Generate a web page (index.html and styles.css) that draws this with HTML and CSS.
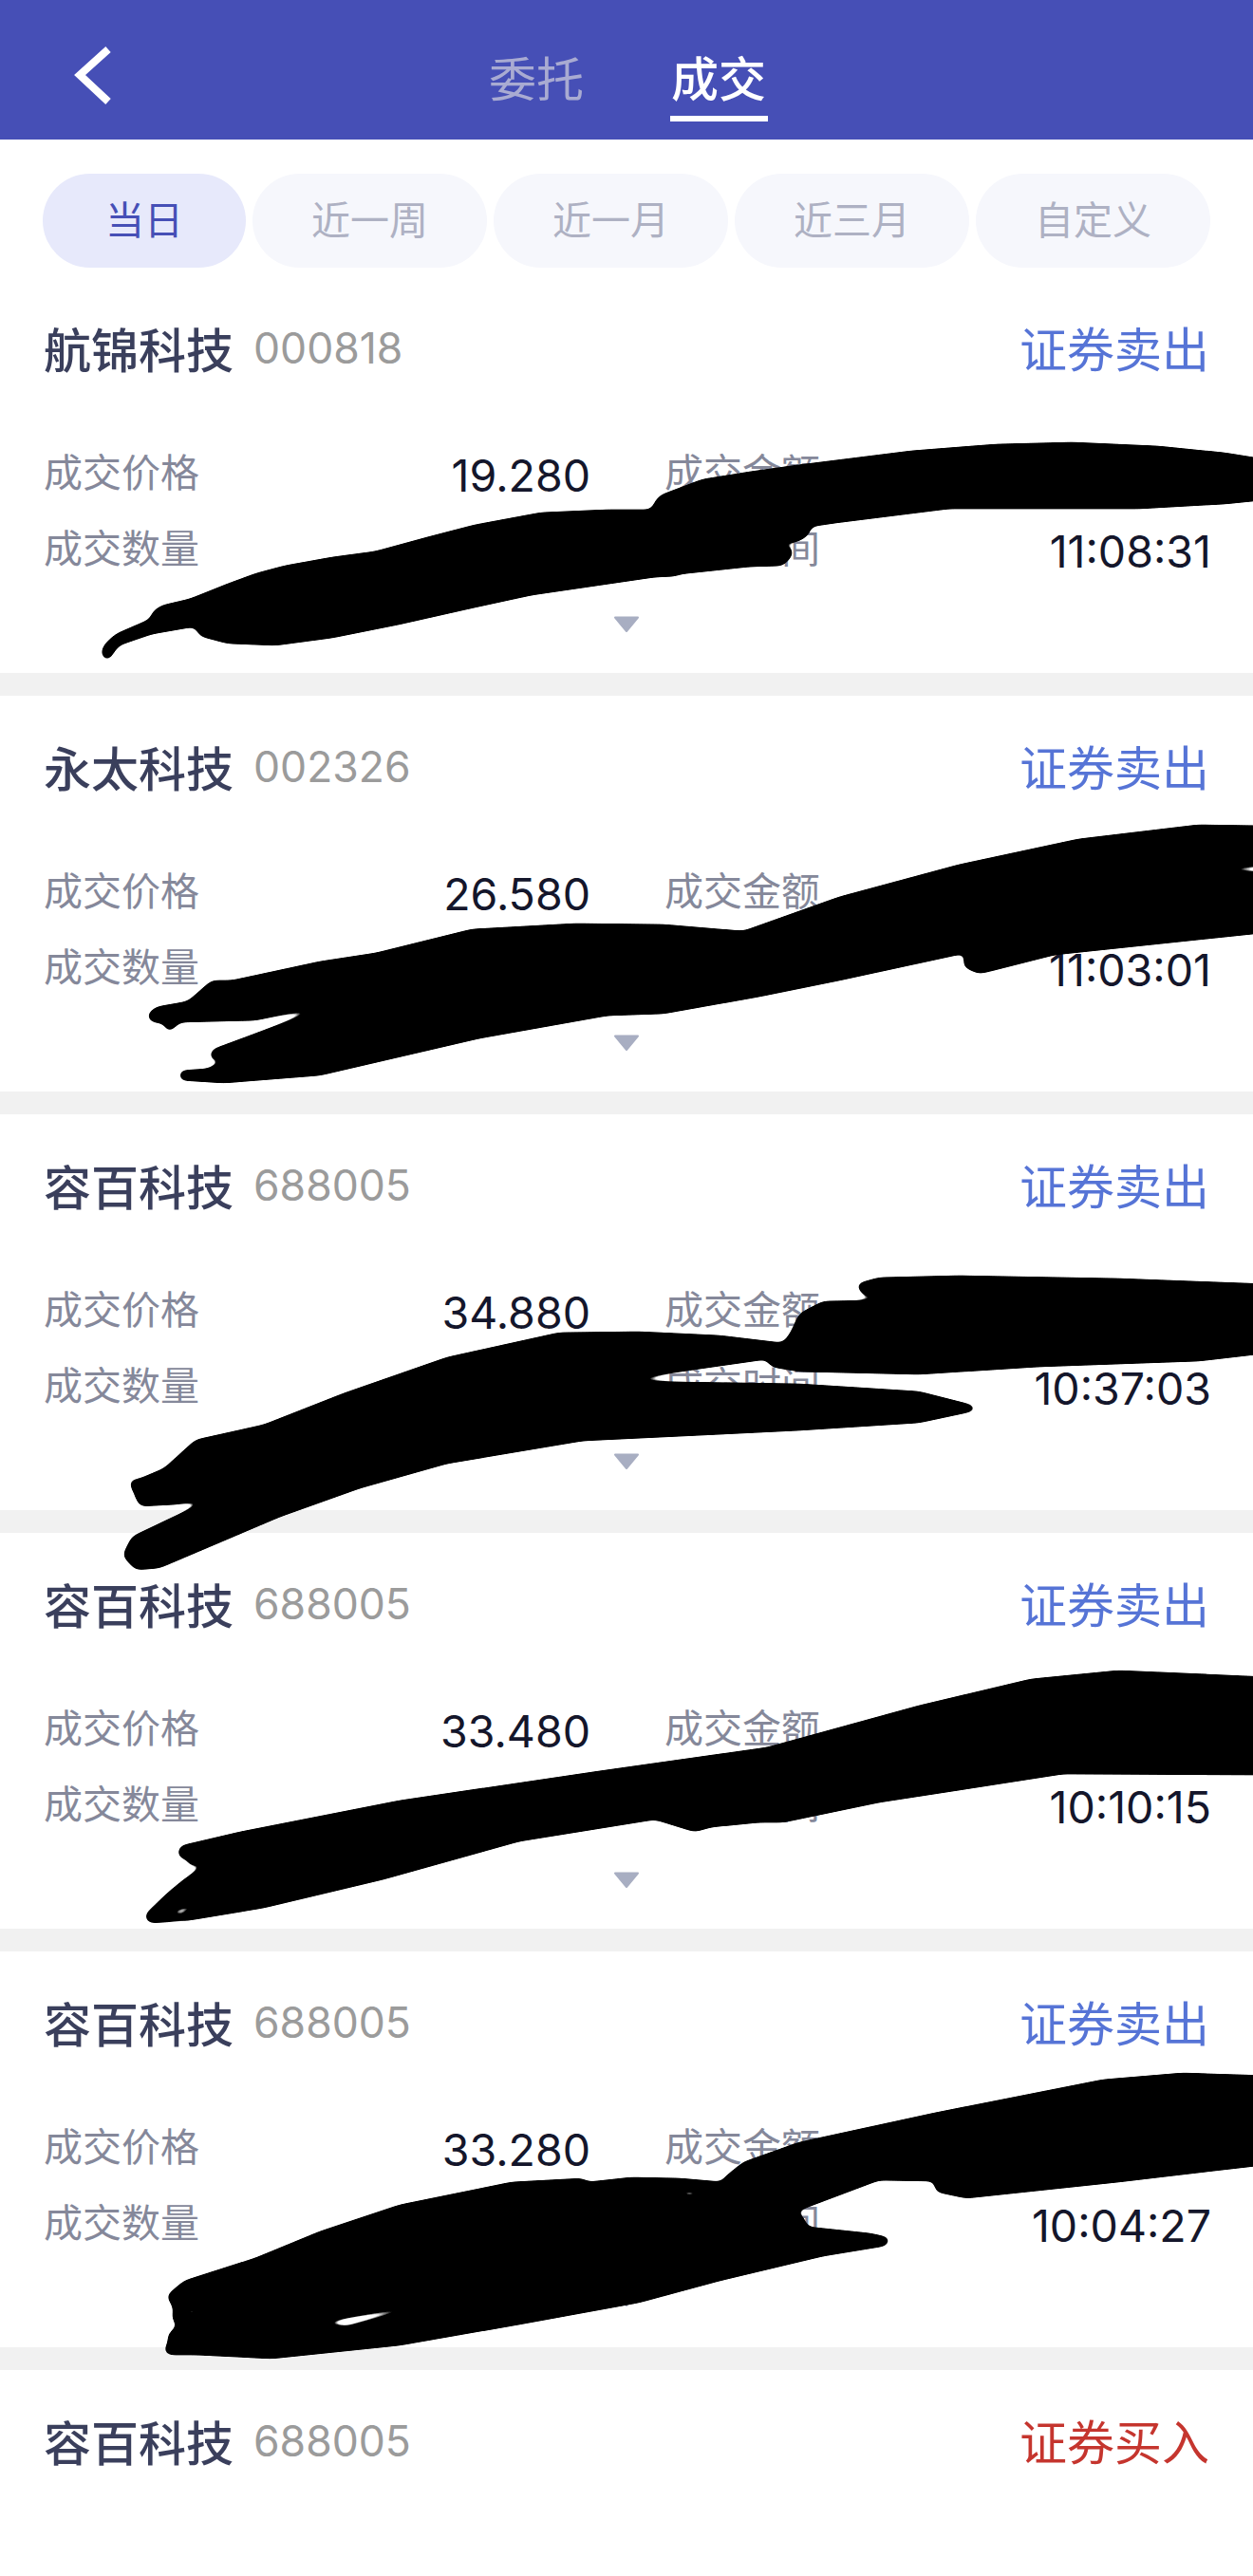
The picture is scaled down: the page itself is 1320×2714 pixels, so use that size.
FILE: index.html
```html
<!DOCTYPE html>
<html lang="zh-CN">
<head>
<meta charset="utf-8">
<title>成交</title>
<link rel="stylesheet" href="styles.css">
</head>
<body>
<div class="page">
  <header class="topbar">
    <div class="back">
      <svg width="44" height="70" viewBox="0 0 44 70"><polyline points="36,5 6,32 36,60" fill="none" stroke="#fff" stroke-width="8"/></svg>
    </div>
    <nav class="tabs">
      <span class="tab">委托</span>
      <span class="tab tab-on">成交</span>
    </nav>
    <div></div>
  </header>

  <div class="filters">
    <span class="pill pill-on">当日</span>
    <span class="pill">近一周</span>
    <span class="pill">近一月</span>
    <span class="pill">近三月</span>
    <span class="pill">自定义</span>
  </div>

  <main class="list">
    <section class="card">
      <div class="head"><span class="name">航锦科技</span><span class="code">000818</span><span class="type sell">证券卖出</span></div>
      <div class="rows">
        <div class="row"><span class="label">成交价格</span><span class="value">19.280</span></div>
        <div class="row"><span class="label">成交金额</span><span class="value"></span></div>
        <div class="row"><span class="label">成交数量</span><span class="value"></span></div>
        <div class="row"><span class="label">成交时间</span><span class="value">11:08:31</span></div>
      </div>
      <svg class="more" width="28" height="18" viewBox="0 0 28 18"><polygon points="2,1.500 26,1.500 14,16" fill="#a8aec2" stroke="#a8aec2" stroke-width="2" stroke-linejoin="round"/></svg>
    </section>
    <section class="card">
      <div class="head"><span class="name">永太科技</span><span class="code">002326</span><span class="type sell">证券卖出</span></div>
      <div class="rows">
        <div class="row"><span class="label">成交价格</span><span class="value">26.580</span></div>
        <div class="row"><span class="label">成交金额</span><span class="value"></span></div>
        <div class="row"><span class="label">成交数量</span><span class="value"></span></div>
        <div class="row"><span class="label">成交时间</span><span class="value">11:03:01</span></div>
      </div>
      <svg class="more" width="28" height="18" viewBox="0 0 28 18"><polygon points="2,1.500 26,1.500 14,16" fill="#a8aec2" stroke="#a8aec2" stroke-width="2" stroke-linejoin="round"/></svg>
    </section>
    <section class="card">
      <div class="head"><span class="name">容百科技</span><span class="code">688005</span><span class="type sell">证券卖出</span></div>
      <div class="rows">
        <div class="row"><span class="label">成交价格</span><span class="value">34.880</span></div>
        <div class="row"><span class="label">成交金额</span><span class="value"></span></div>
        <div class="row"><span class="label">成交数量</span><span class="value"></span></div>
        <div class="row"><span class="label">成交时间</span><span class="value">10:37:03</span></div>
      </div>
      <svg class="more" width="28" height="18" viewBox="0 0 28 18"><polygon points="2,1.500 26,1.500 14,16" fill="#a8aec2" stroke="#a8aec2" stroke-width="2" stroke-linejoin="round"/></svg>
    </section>
    <section class="card">
      <div class="head"><span class="name">容百科技</span><span class="code">688005</span><span class="type sell">证券卖出</span></div>
      <div class="rows">
        <div class="row"><span class="label">成交价格</span><span class="value">33.480</span></div>
        <div class="row"><span class="label">成交金额</span><span class="value"></span></div>
        <div class="row"><span class="label">成交数量</span><span class="value"></span></div>
        <div class="row"><span class="label">成交时间</span><span class="value">10:10:15</span></div>
      </div>
      <svg class="more" width="28" height="18" viewBox="0 0 28 18"><polygon points="2,1.500 26,1.500 14,16" fill="#a8aec2" stroke="#a8aec2" stroke-width="2" stroke-linejoin="round"/></svg>
    </section>
    <section class="card">
      <div class="head"><span class="name">容百科技</span><span class="code">688005</span><span class="type sell">证券卖出</span></div>
      <div class="rows">
        <div class="row"><span class="label">成交价格</span><span class="value">33.280</span></div>
        <div class="row"><span class="label">成交金额</span><span class="value"></span></div>
        <div class="row"><span class="label">成交数量</span><span class="value"></span></div>
        <div class="row"><span class="label">成交时间</span><span class="value">10:04:27</span></div>
      </div>
      <svg class="more" width="28" height="18" viewBox="0 0 28 18"><polygon points="2,1.500 26,1.500 14,16" fill="#a8aec2" stroke="#a8aec2" stroke-width="2" stroke-linejoin="round"/></svg>
    </section>
    <section class="card">
      <div class="head"><span class="name">容百科技</span><span class="code">688005</span><span class="type buy">证券买入</span></div>
    </section>
  </main>

  <svg class="scribble" width="1320" height="2714" viewBox="0 0 1320 2714">
    <defs>
      <filter id="smooth" filterUnits="userSpaceOnUse" x="0" y="0" width="1320" height="2714">
        <feGaussianBlur stdDeviation="4"/>
        <feComponentTransfer><feFuncA type="linear" slope="14" intercept="-6"/></feComponentTransfer>
      </filter>
    </defs>
    <g class="ink">
    <path d="M112 697 L106 688 L110 679 L122 668 L159 652 L160 645 L170 638 L200 631 L240 615 L270 604 L300 596 L350 587 L395 581 L450 566 L500 553 L570 540 L640 537 L687 537 L689 530 L695 522 L740 505 L790 497 L840 490 L960 475 L1050 468 L1130 466 L1220 470 L1290 477 L1340 485 L1340 526 L1290 531 L1200 536 L1000 536 L880 551 L853 555 L853 563 L840 571 L780 572 L835 577 L835 585 L825 596 L790 597 L715 605 L713 607 L690 608 L560 627 L500 640 L420 658 L350 672 L290 680 L240 678 L210 670 L206 660 L160 668 L125 680 L118 690 L115 695 Z"/>
    <path fill-rule="evenodd" d="M1340 870 L1262 869 L1136 884 L1010 911 L884 945 L783 981 L699 974 L606 973 L497 979 L396 1004 L337 1013 L244 1033 L223 1033 L198 1055 L164 1061 L154 1070 L160 1077 L173 1078 L177 1089 L189 1077 L269 1075 L354 1057 L223 1106 L220 1116 L240 1116 L219 1126 L189 1128 L189 1138 L236 1141 L337 1133 L505 1094 L640 1070 L699 1068 L800 1050 L884 1033 L1018 1004 L1014 1018 L1031 1026 L1044 1023 L1111 1006 L1340 982 Z M1246 916 L1340 911 L1340 920 Z"/>
    <path d="M901 1353 L926 1346 L1010 1344 L1178 1347 L1340 1353 L1340 1425 L1263 1434 L1094 1440 L968 1448 L842 1445 L812 1440 L808 1432 L648 1455 L842 1458 L968 1466 L1027 1481 L1029 1486 L968 1499 L842 1507 L614 1518 L471 1542 L379 1568 L295 1598 L168 1652 L143 1654 L129 1639 L139 1619 L223 1579 L185 1585 L147 1587 L139 1568 L135 1560 L147 1558 L173 1547 L206 1517 L278 1501 L362 1468 L471 1430 L589 1404 L673 1403 L758 1407 L825 1415 L833 1404 L842 1384 L867 1371 L976 1369 L909 1364 Z"/>
    <path fill-rule="evenodd" d="M1340 1767 L1178 1760 L1086 1769 L968 1797 L808 1841 L631 1866 L421 1897 L253 1930 L189 1945 L187 1956 L202 1961 L194 1968 L223 1960 L194 1980 L177 1994 L152 2018 L156 2026 L194 2024 L278 2010 L404 1980 L547 1940 L690 1917 L732 1930 L749 1925 L800 1920 L825 1920 L926 1899 L1120 1869 L1340 1870 Z M172 2016 L228 1998 L190 2018 Z"/>
    <path fill-rule="evenodd" d="M1340 2187 L1246 2184 L1162 2191 L985 2226 L842 2257 L783 2278 L762 2295 L762 2299 L716 2295 L665 2294 L619 2299 L614 2295 L539 2299 L421 2323 L337 2351 L269 2379 L194 2403 L175 2419 L183 2431 L181 2445 L189 2449 L177 2459 L177 2471 L171 2475 L177 2481 L206 2481 L286 2485 L421 2471 L547 2449 L673 2426 L758 2403 L867 2377 L934 2366 L939 2358 L917 2353 L850 2346 L846 2334 L833 2332 L926 2297 L985 2298 L985 2309 L1018 2316 L1178 2299 L1340 2280 Z M328 2449 L505 2415 L365 2451 Z M190 2437 L226 2423 L200 2441 Z M705 2307 L755 2309 L725 2315 Z M983 2290 L1020 2281 L1000 2293 Z"/>
    </g>
  </svg>
</div>
</body>
</html>
```

FILE: styles.css
```css
* { box-sizing: border-box; }
html, body { margin: 0; padding: 0; }
body {
  background: #fff;
  font-family: "Noto Sans CJK SC", "Noto Sans", sans-serif;
}
.page {
  position: relative;
  width: 1320px;
  height: 2714px;
  overflow: hidden;
}
.topbar {
  display: grid;
  grid-template-columns: 1fr auto 1fr;
  align-items: start;
  height: 147px;
  background: #464fb6;
}
.back { padding: 47px 0 0 78px; line-height: 0; }
.tabs { display: flex; gap: 89px; padding-top: 50px; transform: translateX(1px); }
.tab {
  height: 78px;
  font-size: 50px;
  line-height: 60px;
  width: 103px;
  text-align: center;
  color: #a9abd2;
}
.tab-on {
  color: #fff;
  font-weight: 500;
  border-bottom: 6px solid #fff;
}
.filters {
  display: flex;
  gap: 7px;
  height: 171px;
  margin: 0 45px;
  padding: 36px 0 33px;
  border-bottom: 2px solid #e8e8ec;
}
.pill {
  flex: 1 1 0;
  height: 99px;
  border-radius: 50px;
  background: #f6f7fc;
  color: #aeb1c3;
  font-size: 41px;
  line-height: 92px;
  text-align: center;
}
.pill-on {
  flex: 0 0 214px;
  background: #e7e9fb;
  color: #464fb6;
}
.list { background: #fff; }
.card {
  height: 417px;
  padding: 47px 46px 0;
  margin-bottom: 24px;
  box-shadow: 0 24px 0 #f1f1f1;
  background: #fff;
}
.card:first-child { margin-top: -26px; }
.card:last-child { box-shadow: none; }
.head {
  display: flex;
  align-items: flex-start;
  height: 56px;
}
.name {
  font-size: 50px;
  font-weight: 500;
  color: #3a3f5c;
  line-height: 54px;
}
.code {
  margin-left: 21px;
  font-family: "Inter", sans-serif;
  font-size: 44.5px;
  color: #9b9b9b;
  line-height: 56px;
}
.type {
  margin-left: auto;
  font-size: 50px;
  line-height: 52px;
}
.sell { color: #5674d6; }
.buy { color: #c5352e; }
.rows {
  display: grid;
  grid-template-columns: 574px 574px;
  column-gap: 80px;
  margin-top: 62px;
}
.row {
  display: flex;
  justify-content: space-between;
  align-items: center;
  height: 80px;
}
.label {
  font-size: 41px;
  color: #85889a;
  line-height: 76px;
  height: 80px;
}
.value {
  font-family: "Inter", sans-serif;
  font-size: 46.5px;
  color: #14162b;
  line-height: 80px;
  padding-top: 8px;
  margin-right: -2px;
}
.more {
  display: block;
  margin: 32px auto 0;
}
.scribble {
  position: absolute;
  top: 0;
  left: 0;
}
.ink {
  fill: #000;
  filter: url(#smooth);
}
```
